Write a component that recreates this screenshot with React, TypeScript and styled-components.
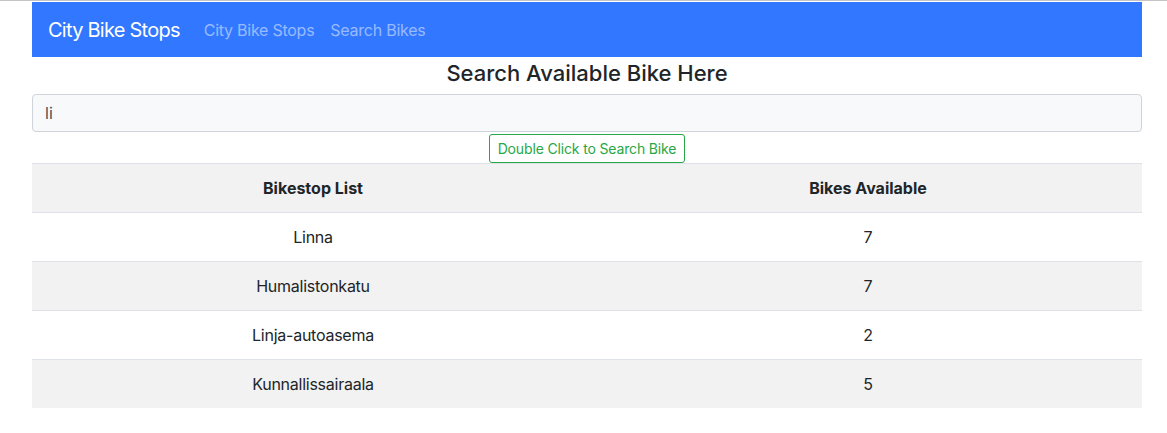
import React from "react";
import styled, { createGlobalStyle } from "styled-components";

const Global = createGlobalStyle`
  html, body { margin: 0; padding: 0; background: #fff; }
  body {
    border-top: 1px solid #c4c4c4;
    font-family: Inter, "Noto Sans", "Liberation Sans", sans-serif;
    font-size: 16px;
    line-height: 1.5;
    color: #212529;
  }
  * { box-sizing: border-box; }
`;

const Container = styled.div`
  width: 1110px;
  margin: 1px 0 0 32px;
  display: flex;
  flex-direction: column;
`;

const Navbar = styled.nav`
  height: 55px;
  background: #3177ff;
  display: flex;
  align-items: center;
  padding: 0 16px;
`;

const Brand = styled.a`
  font-size: 20px;
  letter-spacing: -0.75px;
  color: #fff;
  margin-right: 16px;
  text-decoration: none;
  line-height: 30px;
`;

const NavLink = styled.a`
  font-size: 16px;
  letter-spacing: -0.25px;
  color: rgba(255, 255, 255, 0.5);
  padding: 8px 8px;
  text-decoration: none;
`;

const Heading = styled.h3`
  margin: 2px 0 7px;
  text-align: center;
  font-size: 22px;
  font-weight: 500;
  line-height: 28px;
`;

const Input = styled.input`
  height: 38px;
  width: 100%;
  padding: 6px 12px;
  font: inherit;
  color: #495057;
  background: #f8f9fa;
  border: 1px solid #ced4da;
  border-radius: 4px;
  outline: none;
`;

const ButtonRow = styled.div`
  display: flex;
  justify-content: center;
  margin-top: 2px;
`;

const OutlineButton = styled.button`
  height: 29px;
  padding: 0 8px;
  font-family: inherit;
  font-size: 14px;
  letter-spacing: -0.15px;
  color: #28a745;
  background: #fff;
  border: 1px solid #28a745;
  border-radius: 3px;
`;

const Table = styled.table`
  width: 100%;
  border-collapse: collapse;
`;

const Row = styled.tr<{ $striped?: boolean }>`
  background: ${(p) => (p.$striped ? "#f2f2f2" : "#fff")};
`;

const Th = styled.th<{ $w?: string }>`
  width: ${(p) => p.$w || "auto"};
  padding: 12px;
  line-height: 24px;
  font-weight: 700;
  text-align: center;
  border-top: 1px solid #dee2e6;
`;

const Td = styled.td`
  padding: 12px;
  line-height: 24px;
  letter-spacing: -0.25px;
  text-align: center;
  border-top: 1px solid #dee2e6;
`;

const data = [
  { name: "Linna", bikes: 7 },
  { name: "Humalistonkatu", bikes: 7 },
  { name: "Linja-autoasema", bikes: 2 },
  { name: "Kunnallissairaala", bikes: 5 },
];

export default function App() {
  return (
    <>
      <Global />
      <Container>
        <Navbar>
          <Brand>City Bike Stops</Brand>
          <NavLink>City Bike Stops</NavLink>
          <NavLink>Search Bikes</NavLink>
        </Navbar>
        <Heading>Search Available Bike Here</Heading>
        <Input defaultValue="li" />
        <ButtonRow>
          <OutlineButton>Double Click to Search Bike</OutlineButton>
        </ButtonRow>
        <Table>
          <thead>
            <Row $striped>
              <Th $w="562px">Bikestop List</Th>
              <Th>Bikes Available</Th>
            </Row>
          </thead>
          <tbody>
            {data.map((d, i) => (
              <Row key={d.name} $striped={i % 2 === 1}>
                <Td>{d.name}</Td>
                <Td>{d.bikes}</Td>
              </Row>
            ))}
          </tbody>
        </Table>
      </Container>
    </>
  );
}
